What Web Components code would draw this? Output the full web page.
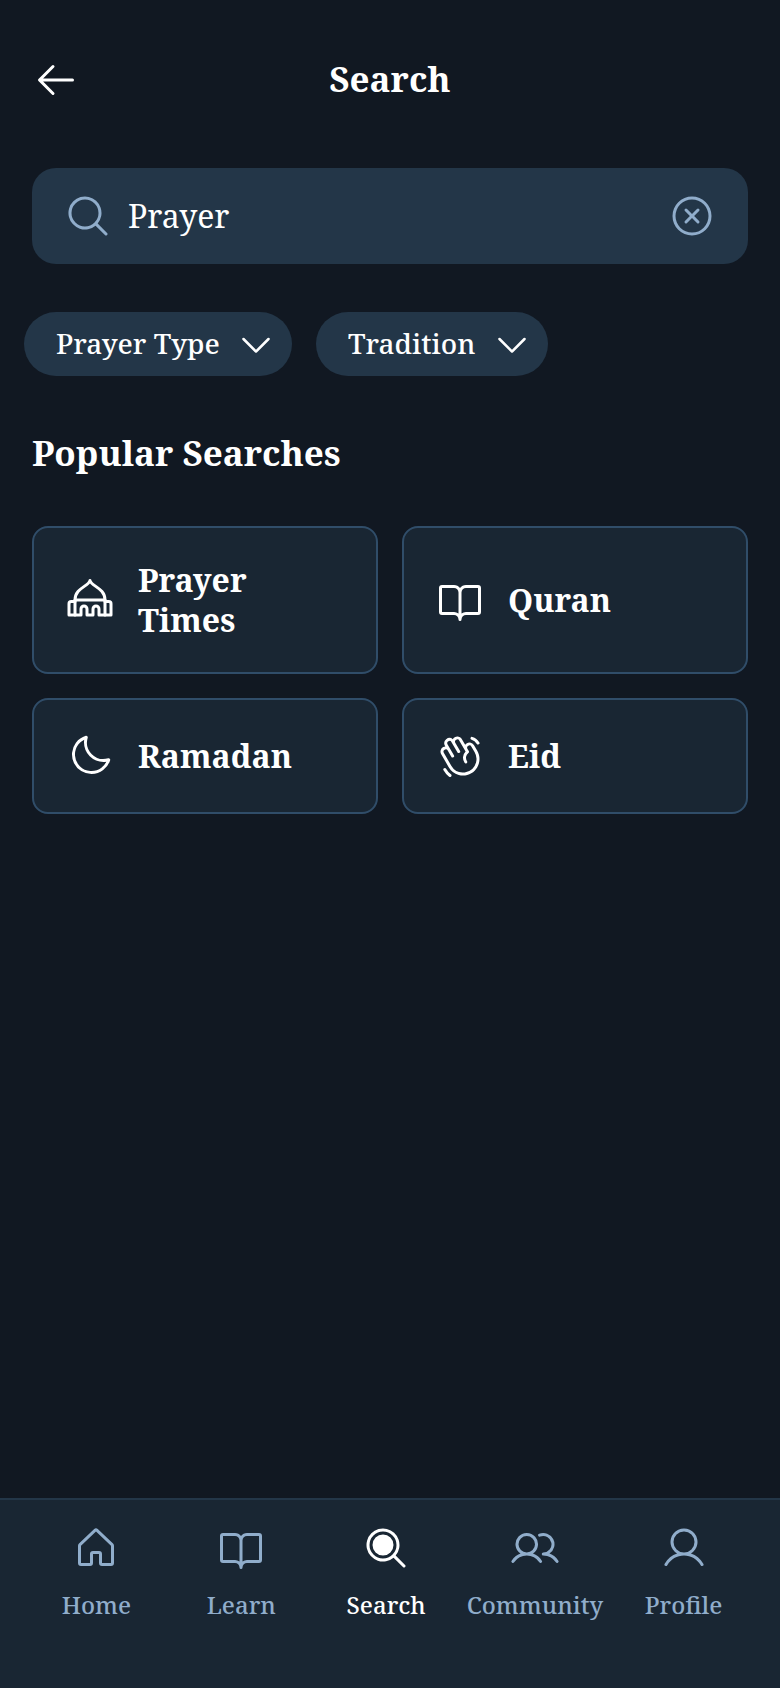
<!DOCTYPE html>
<html lang="en">
<head>
<meta charset="utf-8">
<meta name="viewport" content="width=device-width, initial-scale=1">
<title>Search</title>
<style>
  body {
    margin: 0;
    background: #111822;
    color: #fff;
    font-family: "Noto Serif", "DejaVu Serif", serif;
    --surface: #192633;
    --field: #233648;
    --outline: #304d69;
    --muted: #90adcb;
  }
</style>
</head>
<body>
<search-page>
  <top-bar slot="header">Search</top-bar>
  <search-field value="Prayer"></search-field>
  <filter-row>
    <filter-chip label="Prayer Type"></filter-chip>
    <filter-chip label="Tradition"></filter-chip>
  </filter-row>
  <popular-searches heading="Popular Searches">
    <search-card icon="mosque">Prayer Times</search-card>
    <search-card icon="book">Quran</search-card>
    <search-card icon="moon">Ramadan</search-card>
    <search-card icon="hand">Eid</search-card>
  </popular-searches>
  <nav-bar slot="footer">
    <nav-item icon="house">Home</nav-item>
    <nav-item icon="book">Learn</nav-item>
    <nav-item icon="search-fill" active>Search</nav-item>
    <nav-item icon="users">Community</nav-item>
    <nav-item icon="user">Profile</nav-item>
  </nav-bar>
</search-page>

<script>
const ICONS = {
  back: '<path d="M224,128a8,8,0,0,1-8,8H59.31l58.35,58.34a8,8,0,0,1-11.32,11.32l-72-72a8,8,0,0,1,0-11.32l72-72a8,8,0,0,1,11.32,11.32L59.31,120H216A8,8,0,0,1,224,128Z"/>',
  search: '<path d="M229.66,218.34l-50.07-50.06a88.11,88.11,0,1,0-11.31,11.31l50.06,50.07a8,8,0,0,0,11.32-11.32ZM40,112a72,72,0,1,1,72,72A72.08,72.08,0,0,1,40,112Z"/>',
  'search-fill': '<path d="M168,112a56,56,0,1,1-56-56A56,56,0,0,1,168,112Zm61.66,117.66a8,8,0,0,1-11.32,0l-50.06-50.07a88,88,0,1,1,11.32-11.31l50.06,50.06A8,8,0,0,1,229.66,229.66ZM112,184a72,72,0,1,0-72-72A72.08,72.08,0,0,0,112,184Z"/>',
  clear: '<path d="M165.66,101.66,139.31,128l26.35,26.34a8,8,0,0,1-11.32,11.32L128,139.31l-26.34,26.35a8,8,0,0,1-11.32-11.32L116.69,128,90.34,101.66a8,8,0,0,1,11.32-11.32L128,116.69l26.34-26.35a8,8,0,0,1,11.32,11.32ZM232,128A104,104,0,1,1,128,24,104.11,104.11,0,0,1,232,128Zm-16,0a88,88,0,1,0-88,88A88.1,88.1,0,0,0,216,128Z"/>',
  caret: '<path d="M213.66,101.66l-80,80a8,8,0,0,1-11.32,0l-80-80A8,8,0,0,1,53.66,90.34L128,164.69l74.34-74.35a8,8,0,0,1,11.32,11.32Z"/>',
  mosque: '<g fill="none" stroke="currentColor" stroke-width="16" stroke-linecap="round" stroke-linejoin="round"><path d="M128,24C120,56,48,64,48,128V208M128,24C136,56,208,64,208,128V208"/><path d="M48,128H208"/><path d="M48,136H28A12,12,0,0,0,16,148V208H80V176A16,16,0,0,1,112,176V208H144V176A16,16,0,0,1,176,176V208H240V148A12,12,0,0,0,228,136H208"/></g>',
  book: '<path d="M224,48H160a40,40,0,0,0-32,16A40,40,0,0,0,96,48H32A16,16,0,0,0,16,64V192a16,16,0,0,0,16,16H96a24,24,0,0,1,24,24,8,8,0,0,0,16,0,24,24,0,0,1,24-24h64a16,16,0,0,0,16-16V64A16,16,0,0,0,224,48ZM96,192H32V64H96a24,24,0,0,1,24,24V200A39.81,39.81,0,0,0,96,192Zm128,0H160a39.81,39.81,0,0,0-24,8V88a24,24,0,0,1,24-24h64Z"/>',
  moon: '<path d="M233.54,142.23a8,8,0,0,0-8-2,88.08,88.08,0,0,1-109.8-109.8,8,8,0,0,0-10-10,104.84,104.84,0,0,0-52.91,37A104,104,0,0,0,136,224a103.09,103.09,0,0,0,62.52-20.88,104.84,104.84,0,0,0,37-52.91A8,8,0,0,0,233.54,142.23ZM188.9,190.34A88,88,0,0,1,65.66,67.11a89,89,0,0,1,31.4-26A106,106,0,0,0,96,56,104.11,104.11,0,0,0,200,160a106,106,0,0,0,14.92-1.06A89,89,0,0,1,188.9,190.34Z"/>',
  hand: '<path d="M220.17,100,202.86,70a28,28,0,0,0-38.24-10.25,27.69,27.69,0,0,0-9,8.34L138.2,38a28,28,0,0,0-48.48,0A28,28,0,0,0,48.15,74l1.59,2.76A27.67,27.67,0,0,0,38,80.41a28,28,0,0,0-10.24,38.25l40,69.32a87.47,87.47,0,0,0,53.43,41,88.56,88.56,0,0,0,22.92,3,88,88,0,0,0,76.06-132Zm-6.66,62.64A72,72,0,0,1,81.62,180l-40-69.32a12,12,0,0,1,20.78-12L81.63,132a8,8,0,1,0,13.85-8L62,66A12,12,0,1,1,82.78,54L114,108a8,8,0,1,0,13.85-8L103.57,58h0a12,12,0,1,1,20.78-12l33.42,57.9a48,48,0,0,0-5.54,60.6,8,8,0,0,0,13.24-9A32,32,0,0,1,172.78,112a8,8,0,0,0,2.13-10.4L168.23,90A12,12,0,1,1,189,78l17.31,30A71.56,71.56,0,0,1,213.51,162.62ZM184.25,31.71A8,8,0,0,1,194,26a59.62,59.62,0,0,1,36.53,28l.33.57a8,8,0,1,1-13.85,8l-.33-.57a43.67,43.67,0,0,0-26.8-20.5A8,8,0,0,1,184.25,31.71ZM80.89,237a8,8,0,0,1-11.23,1.33A119.56,119.56,0,0,1,40.06,204a8,8,0,0,1,13.86-8,103.67,103.67,0,0,0,25.64,29.72A8,8,0,0,1,80.89,237Z"/>',
  house: '<path d="M218.83,103.77l-80-75.48a1.14,1.14,0,0,1-.11-.11,16,16,0,0,0-21.53,0l-.11.11L37.17,103.77A16,16,0,0,0,32,115.55V208a16,16,0,0,0,16,16H96a16,16,0,0,0,16-16V160h32v48a16,16,0,0,0,16,16h48a16,16,0,0,0,16-16V115.55A16,16,0,0,0,218.83,103.77ZM208,208H160V160a16,16,0,0,0-16-16H112a16,16,0,0,0-16,16v48H48V115.55l.11-.1L128,40l79.9,75.43.11.1Z"/>',
  users: '<path d="M117.25,157.92a60,60,0,1,0-66.5,0A95.83,95.83,0,0,0,3.53,195.63a8,8,0,1,0,13.4,8.74,80,80,0,0,1,134.14,0,8,8,0,0,0,13.4-8.74A95.83,95.83,0,0,0,117.25,157.92ZM40,108a44,44,0,1,1,44,44A44.05,44.05,0,0,1,40,108Zm210.14,98.7a8,8,0,0,1-11.07-2.33A79.83,79.83,0,0,0,172,168a8,8,0,0,1,0-16,44,44,0,1,0-16.34-84.87,8,8,0,1,1-5.94-14.85,60,60,0,0,1,55.53,105.64,95.83,95.83,0,0,1,47.22,37.71A8,8,0,0,1,250.14,206.7Z"/>',
  user: '<path d="M230.92,212c-15.23-26.33-38.7-45.21-66.09-54.16a72,72,0,1,0-73.66,0C63.78,166.78,40.31,185.66,25.08,212a8,8,0,1,0,13.85,8c18.84-32.56,52.14-52,89.07-52s70.23,19.44,89.07,52a8,8,0,1,0,13.85-8ZM72,96a56,56,0,1,1,56,56A56.06,56.06,0,0,1,72,96Z"/>'
};

class Base extends HTMLElement {
  connectedCallback() {
    if (!this.shadowRoot) this.attachShadow({ mode: 'open' }).innerHTML = this.render();
  }
}
const define = (name, render) => customElements.define(name, class extends Base {
  render() { return render(this); }
});

define('app-icon', el => `
  <style>
    :host { display: block; flex: none; width: 48px; height: 48px; }
    svg { display: block; width: 100%; height: 100%; }
  </style>
  <svg viewBox="0 0 256 256" fill="currentColor" aria-hidden="true">${ICONS[el.getAttribute('name')]}</svg>`);

define('search-page', () => `
  <style>
    :host { display: flex; flex-direction: column; min-height: 100vh; }
    main { flex: 1; }
  </style>
  <slot name="header"></slot>
  <main><slot></slot></main>
  <slot name="footer"></slot>`);

define('top-bar', () => `
  <style>
    :host { display: block; padding: 32px 32px 16px; }
    header { display: grid; grid-template-columns: 96px 1fr 96px; align-items: center; height: 96px; }
    button { display: flex; align-items: center; height: 96px; padding: 0; border: 0; background: none; color: inherit; }
    h1 { margin: 0; padding-bottom: 2px; text-align: center; font-size: 35px; line-height: 42px; font-weight: 700; }
  </style>
  <header>
    <button type="button" aria-label="Back"><app-icon name="back"></app-icon></button>
    <h1><slot></slot></h1>
  </header>`);

define('search-field', el => `
  <style>
    :host { display: block; padding: 24px 32px; }
    form { display: flex; align-items: center; gap: 16px; height: 96px; padding: 0 32px;
      border-radius: 24px; background: var(--field); color: var(--muted); }
    input { flex: 1; min-width: 0; padding: 0; border: 0; outline: 0; background: none; color: #fff;
      font-family: inherit; font-size: 32px; line-height: 48px; }
    button { padding: 0; border: 0; background: none; color: inherit; }
  </style>
  <form>
    <app-icon name="search"></app-icon>
    <input type="text" aria-label="Search" value="${el.getAttribute('value')}">
    <button type="button" aria-label="Clear"><app-icon name="clear"></app-icon></button>
  </form>`);

define('filter-row', () => `
  <style>:host { display: flex; flex-wrap: wrap; gap: 24px; padding: 24px; }</style>
  <slot></slot>`);

define('filter-chip', el => `
  <style>
    :host { display: grid; align-items: center; height: 64px; border-radius: 32px; background: var(--field); }
    select { grid-area: 1 / 1; height: 64px; padding: 0 72px 2px 32px; border: 0; border-radius: 32px;
      appearance: none; background: none; color: inherit; font-family: inherit;
      font-size: 28px; line-height: 44px; font-weight: 500; }
    app-icon { grid-area: 1 / 1; justify-self: end; width: 40px; height: 40px; margin-right: 16px; pointer-events: none; }
  </style>
  <select aria-label="${el.getAttribute('label')}"><option>${el.getAttribute('label')}</option></select>
  <app-icon name="caret"></app-icon>`);

define('popular-searches', el => `
  <style>
    :host { display: block; padding: 32px; }
    h2 { margin: 0 0 52px; font-size: 35px; line-height: 42px; font-weight: 700; }
    div { display: grid; grid-template-columns: 1fr 1fr; gap: 24px; }
  </style>
  <h2>${el.getAttribute('heading')}</h2>
  <div><slot></slot></div>`);

define('search-card', el => `
  <style>
    :host { display: grid; }
    a { display: flex; align-items: center; gap: 24px; padding: 32px; border: 2px solid var(--outline);
      border-radius: 16px; background: var(--surface); color: inherit; text-decoration: none;
      font-size: 32px; line-height: 40px; font-weight: 700; }
  </style>
  <a href="#"><app-icon name="${el.getAttribute('icon')}"></app-icon><span><slot></slot></span></a>`);

define('nav-bar', () => `
  <style>
    :host { display: block; border-top: 2px solid var(--field); background: var(--surface); }
    nav { display: flex; gap: 16px; padding: 16px 32px 66px; }
  </style>
  <nav aria-label="Main"><slot></slot></nav>`);

define('nav-item', el => `
  <style>
    :host { display: block; flex: 1 1 0; color: var(--muted); }
    :host([active]) { color: #fff; }
    a { display: flex; flex-direction: column; align-items: center; gap: 8px; color: inherit; text-decoration: none;
      font-size: 24px; line-height: 34px; font-weight: 500; }
    app-icon { padding: 8px 0; }
  </style>
  <a href="#"><app-icon name="${el.getAttribute('icon')}"></app-icon><span><slot></slot></span></a>`);
</script>
</body>
</html>
